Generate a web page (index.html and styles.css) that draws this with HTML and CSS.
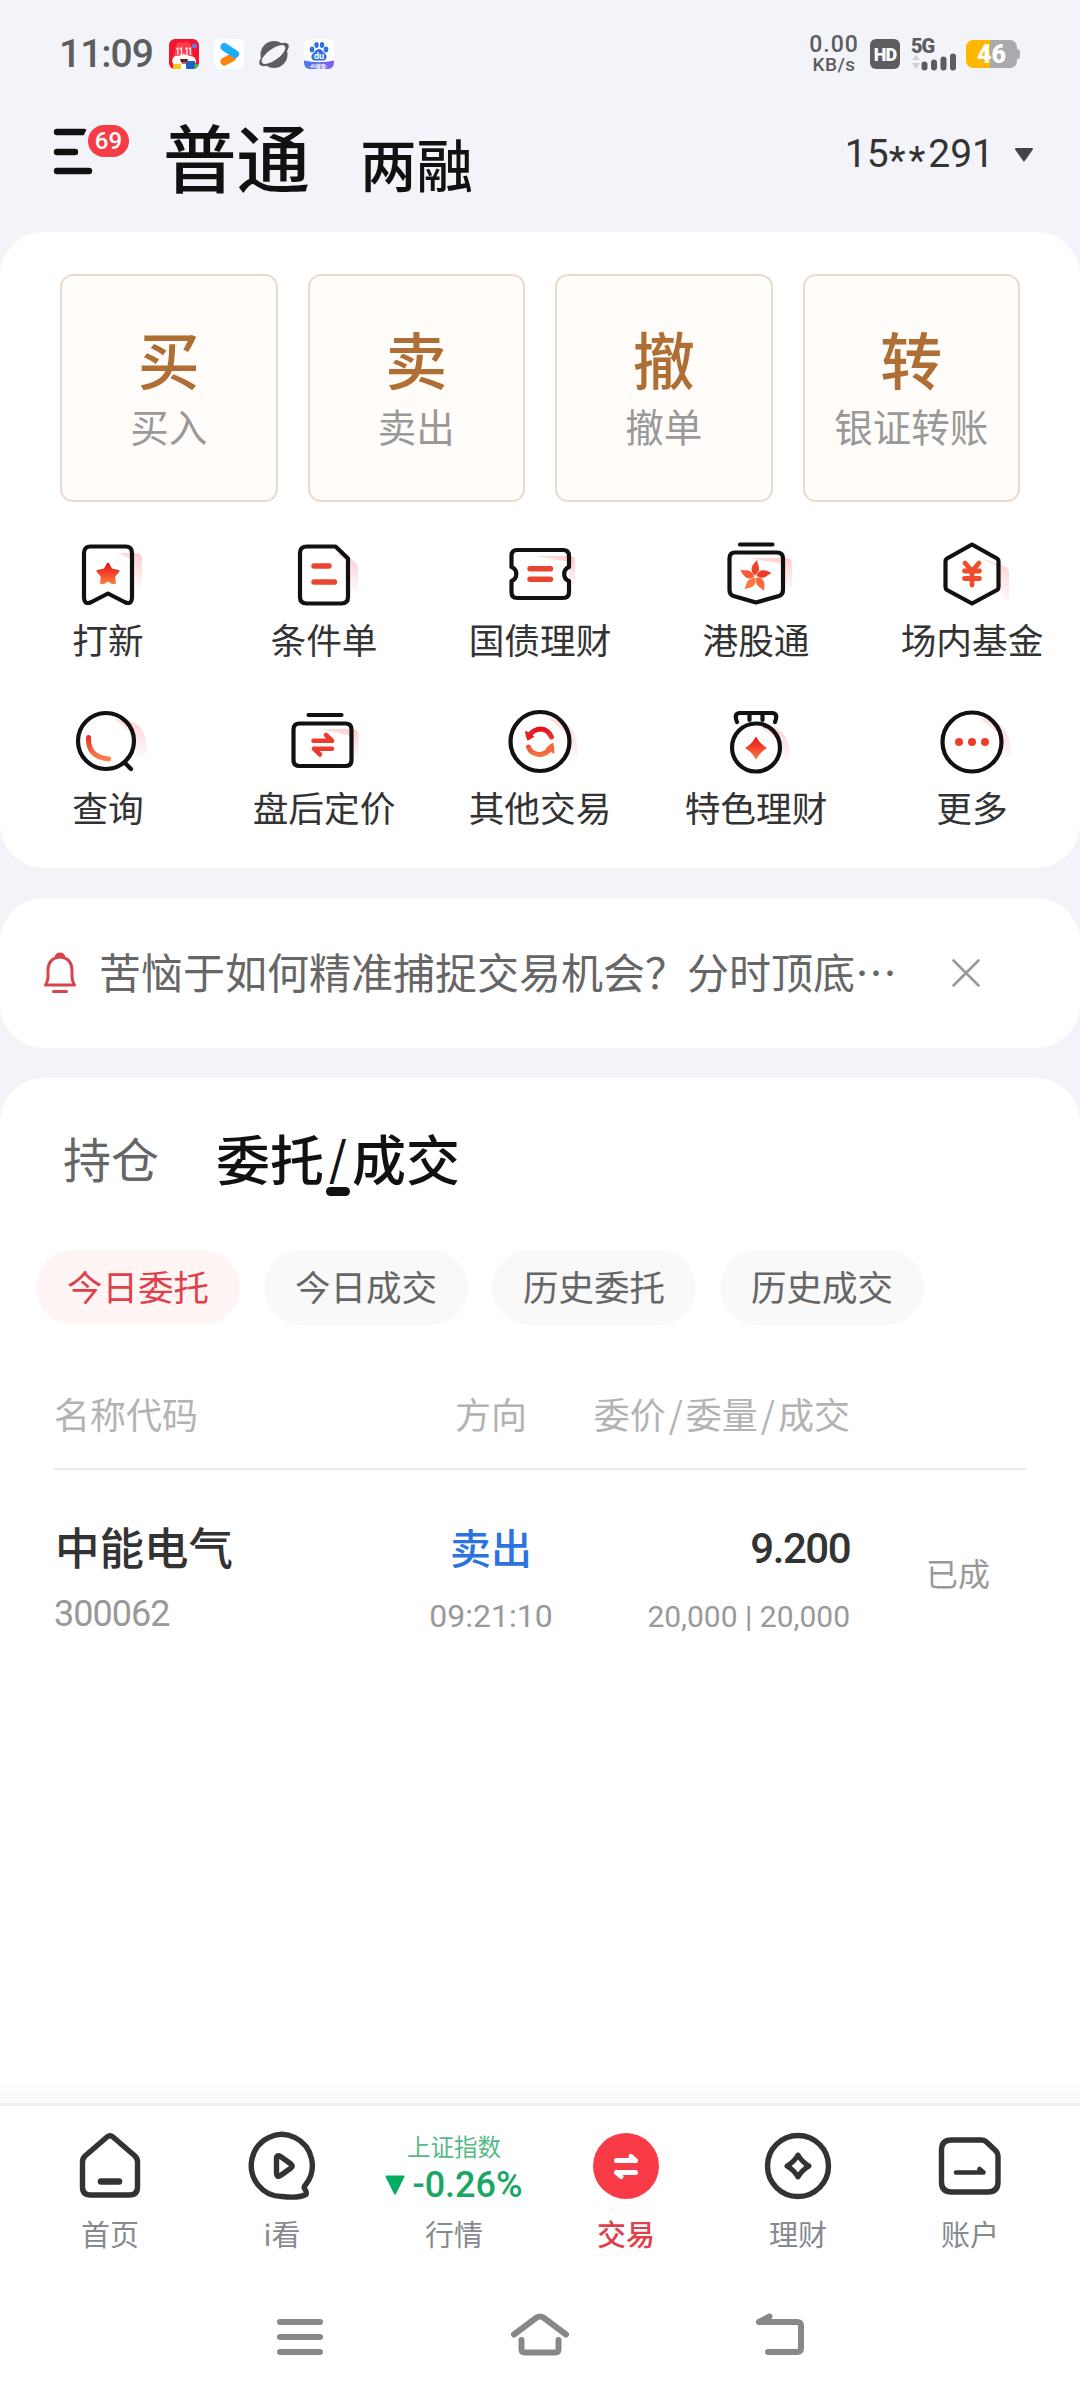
FILE: index.html
```html
<!DOCTYPE html>
<html lang="zh-CN">
<head>
<meta charset="utf-8">
<title>交易</title>
<link rel="stylesheet" href="styles.css">
</head>
<body>
<svg class="defs" width="0" height="0" aria-hidden="true">
  <defs>
    <linearGradient id="glow" x1="1" y1="0" x2="0.55" y2="1">
      <stop offset="0" stop-color="#f5323c" stop-opacity=".26"/>
      <stop offset=".45" stop-color="#f5323c" stop-opacity=".13"/>
      <stop offset="1" stop-color="#f5323c" stop-opacity="0"/>
    </linearGradient>
    <linearGradient id="hot" gradientUnits="userSpaceOnUse" x1="0" y1="20" x2="0" y2="53">
      <stop offset="0" stop-color="#e60f1e"/>
      <stop offset="1" stop-color="#fb8748"/>
    </linearGradient>
    <linearGradient id="star" x1="0" y1="0" x2="0" y2="1">
      <stop offset="0" stop-color="#e8101c"/>
      <stop offset="1" stop-color="#fd7a3c"/>
    </linearGradient>
    <linearGradient id="violet" x1="0" y1="0" x2="1" y2="0">
      <stop offset="0" stop-color="#4a77f0"/>
      <stop offset="1" stop-color="#8460ee"/>
    </linearGradient>
    <clipPath id="tile"><rect width="30" height="30" rx="6"/></clipPath>
  </defs>
</svg>

<div class="statusbar">
  <span class="clock">11:09</span>
  <div class="apps">
    <svg width="30" height="30" viewBox="0 0 30 30"><g clip-path="url(#tile)">
      <rect width="30" height="30" fill="#f3152c"/>
      <path d="M7 6Q9 1 14 4Q19 0 22 6L24 17H5Z" fill="#fb3c4a"/>
      <circle cx="25.500" cy="7" r="2.500" fill="#6c78e8"/>
      <path d="M3 22Q4 16 9 17Q15 14 21 17Q27 17 27 23L23 30H6Z" fill="#fff"/>
      <path d="M11 20H19Q18 25 15 25Q12 25 11 20Z" fill="#60232a"/>
      <path d="M13 23H18L17 25H14Z" fill="#f34a50"/>
      <rect x="4" y="25" width="8" height="5" fill="#ffc51e"/>
      <rect x="17" y="22" width="9" height="8" rx="1" fill="#1b60c8"/>
      <path d="M26 25H30V30H25Z" fill="#35ba55"/>
      <text x="7" y="15.500" class="tile-sale" textLength="16" lengthAdjust="spacingAndGlyphs">11.11</text>
    </g></svg>
    <svg width="30" height="30" viewBox="0 0 30 30"><rect width="30" height="30" rx="6" fill="#fff"/>
      <path d="M10.500 22.500L18 18.500" stroke="#ff860d" stroke-width="8" stroke-linecap="round"/>
      <path d="M10.500 8L21 15" stroke="#19aefa" stroke-width="8" stroke-linecap="round"/>
    </svg>
    <svg width="30" height="30" viewBox="0 0 30 30">
      <circle cx="15" cy="15.500" r="13.500" fill="#5c5d5f"/>
      <ellipse cx="15" cy="15.500" rx="17.500" ry="7" transform="rotate(-36 15 15.500)" fill="#5c5d5f"/>
      <ellipse cx="14.500" cy="15.500" rx="14" ry="5.600" transform="rotate(-36 14.500 15.500)" fill="#f3f4f9"/>
    </svg>
    <svg width="30" height="30" viewBox="0 0 30 30"><g clip-path="url(#tile)">
      <rect width="30" height="30" fill="#fff"/>
      <g fill="#2f6fe4"><ellipse cx="8" cy="10.500" rx="2.300" ry="3"/><ellipse cx="12.500" cy="6" rx="2.200" ry="3"/><ellipse cx="18" cy="6" rx="2.200" ry="3"/><ellipse cx="22" cy="10.500" rx="2.300" ry="3"/>
      <path d="M15 10C18 10 19 13 21 14.500C24 17 22.500 21.500 19 21.500H11C7.500 21.500 6 17 9 14.500C11 13 12 10 15 10Z"/></g>
      <path d="M0 21.500Q15 25 30 21.500V30H0Z" fill="url(#violet)"/>
      <text x="10" y="20" class="tile-du">du</text>
      <text x="5" y="28.800" class="tile-ai">-AI搜索-</text>
    </g></svg>
  </div>
  <div class="signals">
    <div class="speed"><span class="rate">0.00</span><span class="unit">KB/s</span></div>
    <span class="hd">HD</span>
    <div class="cell">
      <span class="gen">5G</span>
      <svg width="46" height="18" viewBox="0 0 46 18">
        <path d="M1 6L5 1L9 6ZM1 9H9L5 15Z" fill="#cfd0d4"/>
        <path d="M13.500 10.500V13.500M23 8.500V13.500M32.500 5.500V13.500M42 2.500V13.500" stroke="#5c5d5f" stroke-width="6" stroke-linecap="round"/>
      </svg>
    </div>
    <div class="battery"><span>46</span></div>
  </div>
</div>

<header class="header">
  <div class="menu">
    <svg width="46" height="46" viewBox="0 0 46 46">
      <path d="M3 3H30M3 23H21M3 42H35" stroke="#111" stroke-width="6.400" stroke-linecap="round"/>
      <path d="M34 -3L29 8H46V-3Z" fill="#f3f4f9"/>
    </svg>
    <span class="badge">69</span>
  </div>
  <div class="modes"><h1>普通</h1><h2>两融</h2></div>
  <div class="account">
    <span>15<i>**</i>291</span>
    <svg width="20" height="14" viewBox="0 0 20 14"><path d="M2 1H18L10 12.500Z" fill="#444" stroke="#444" stroke-width="2" stroke-linejoin="round"/></svg>
  </div>
</header>

<section class="panel trade">
  <div class="actions">
    <div class="action"><b>买</b><span>买入</span></div>
    <div class="action"><b>卖</b><span>卖出</span></div>
    <div class="action"><b>撤</b><span>撤单</span></div>
    <div class="action"><b>转</b><span>银证转账</span></div>
  </div>
  <div class="tools">
    <div class="tool">
      <svg class="ico" viewBox="0 0 88 70">
        <path d="M54 13H72Q78 13 78 19V48H69V20Z" fill="url(#glow)"/>
        <path class="ln" d="M26.500 6.500H61.500Q68 6.500 68 13V57Q68 65.500 60.500 62L44 53.500L27.500 62Q20 65.500 20 57V13Q20 6.500 26.500 6.500Z"/>
        <path d="M44 23.500L47.400 29.500L54.500 31L50 36.500L51 43H37L38 36.500L33.500 31L40.600 29.500Z" fill="url(#star)" stroke="url(#star)" stroke-width="2" stroke-linejoin="round"/>
        <path d="M38 45.500L44 41.500L50 45.500Z" fill="#fff"/>
      </svg><span>打新</span>
    </div>
    <div class="tool">
      <svg class="ico" viewBox="0 0 88 70">
        <path d="M56 14H66L76 23Q78 25 78 28V52H68V22Z" fill="url(#glow)"/>
        <path class="ln" d="M27 6.500H55.500L68 18.500V57Q68 63.500 61.500 63.500H26.500Q20 63.500 20 57V13Q20 6.500 27 6.500Z"/>
        <path class="rd" d="M34 26H49M34 42H54.500"/>
      </svg><span>条件单</span>
    </div>
    <div class="tool">
      <svg class="ico" viewBox="0 0 88 70">
        <path d="M40 16H74Q79 16 79 21V46H73V22Z" fill="url(#glow)"/>
        <path class="ln" d="M21 10H67Q73 10 73 16V27A7.500 7.500 0 0 0 73 41V52Q73 58 67 58H21Q15.500 58 15.500 52V41A7.500 7.500 0 0 0 15.500 27V16Q15.500 10 21 10Z"/>
        <path class="rd" d="M34 28.700H54.500M34 39.300H54.500"/>
      </svg><span>国债理财</span>
    </div>
    <div class="tool">
      <svg class="ico" viewBox="0 0 88 70">
        <path d="M36 18H74Q80 18 80 24V48H71V24Z" fill="url(#glow)"/>
        <path class="ln" d="M28 4.500H60.500M23 12.500H65Q71 12.500 71 18.500V50Q71 54.500 67 56L44 62.500L21.500 56Q17.500 54.500 17.500 50V18.500Q17.500 12.500 23 12.500Z"/>
        <g transform="translate(43.500 36.500)">
          <path d="M-.300-1C-6-5-5-11 2-16.500C1.500-13 4-11 3.500-7C3-4 1-3-.300-1Z" fill="#f4432d"/>
          <path d="M-.300-1C-6-5-5-11 2-16.500C1.500-13 4-11 3.500-7C3-4 1-3-.300-1Z" fill="#f23a2b" transform="rotate(72)"/>
          <path d="M-.300-1C-6-5-5-11 2-16.500C1.500-13 4-11 3.500-7C3-4 1-3-.300-1Z" fill="#fa6a38" transform="rotate(144)"/>
          <path d="M-.300-1C-6-5-5-11 2-16.500C1.500-13 4-11 3.500-7C3-4 1-3-.300-1Z" fill="#fb7a3f" transform="rotate(216)"/>
          <path d="M-.300-1C-6-5-5-11 2-16.500C1.500-13 4-11 3.500-7C3-4 1-3-.300-1Z" fill="#f65b35" transform="rotate(288)"/>
        </g>
      </svg><span>港股通</span>
    </div>
    <div class="tool">
      <svg class="ico" viewBox="0 0 88 70">
        <path d="M50 17L76 26Q81 28 81 33V62L71 50V27Z" fill="url(#glow)"/>
        <path class="ln" d="M44 4.500L69 18.500Q70.500 19.500 70.500 21.500V47Q70.500 49 69 50L44 63.500L19 50Q17.500 49 17.500 47V21.500Q17.500 19.500 19 18.500Z"/>
        <path d="M37 23L44 31L51 23M44 31V45M36.500 31H51.500M36.500 38.500H51.500" fill="none" stroke="#f24a2d" stroke-width="4.800" stroke-linecap="round"/>
      </svg><span>场内基金</span>
    </div>
    <div class="tool">
      <svg class="ico" viewBox="0 0 88 70">
        <path d="M50 11Q66 9 76 19Q83 28 83 45L72 50V28Z" fill="url(#glow)"/>
        <circle class="ln" cx="42" cy="33" r="28"/><path class="ln" d="M61 55L67 61"/>
        <path d="M24.500 29.500Q23.500 49 44.500 51" fill="none" stroke="url(#hot)" stroke-width="5" stroke-linecap="round"/>
      </svg><span>查询</span>
    </div>
    <div class="tool">
      <svg class="ico" viewBox="0 0 88 70">
        <path d="M40 21H73Q78.500 21 78.500 27V50H71V28Z" fill="url(#glow)"/>
        <path class="ln" d="M28.500 7H61.500M19.500 15.500H65.500Q71.500 15.500 71.500 21.500V52Q71.500 58 65.500 58H19.500Q13.500 58 13.500 52V21.500Q13.500 15.500 19.500 15.500Z"/>
        <path d="M33.500 32.700H52M46 27L52 32.700M34 40.700H52M34 40.700L40 46.500" fill="none" stroke="#ef3b2b" stroke-width="4.600" stroke-linecap="round" stroke-linejoin="round"/>
      </svg><span>盘后定价</span>
    </div>
    <div class="tool">
      <svg class="ico" viewBox="0 0 88 70">
        <path d="M52 10Q66 10 74 19Q82 28 82 48L73 50V28Z" fill="url(#glow)"/>
        <circle class="ln" cx="44" cy="33.500" r="29.500"/>
        <path d="M32.500 28Q38 21 45 21Q52 21.500 55.500 29M55.500 39Q50 47 43 46.500Q35 46 32.500 39" fill="none" stroke="url(#hot)" stroke-width="5" stroke-linecap="round"/>
        <path d="M30 24L32 31.500L37 28.500Z" fill="#ea1f22" stroke="#ea1f22" stroke-width="2" stroke-linejoin="round"/><path d="M51 40.500L56.500 36L57.500 44.500Z" fill="#f96b3b" stroke="#f96b3b" stroke-width="2" stroke-linejoin="round"/>
      </svg><span>其他交易</span>
    </div>
    <div class="tool">
      <svg class="ico" viewBox="0 0 88 70">
        <path d="M48 19Q62 16 70 24Q78 33 78 50L68 54V34Z" fill="url(#glow)"/>
        <circle class="ln" cx="44" cy="39.500" r="24"/>
        <path class="ln" d="M25 14Q21.500 5 28 5H60Q66.500 5 63 14M37.500 5V12M50.500 5V12"/>
        <path d="M44 28.500Q48 36 55 40Q48 44 44 51.500Q40 44 33 40Q40 36 44 28.500Z" fill="url(#star)"/>
      </svg><span>特色理财</span>
    </div>
    <div class="tool">
      <svg class="ico" viewBox="0 0 88 70">
        <path d="M52 10Q66 10 74 19Q83 28 83 48L73 50V28Z" fill="url(#glow)"/>
        <circle class="ln" cx="44" cy="34" r="29.500"/>
        <g fill="#ea3f2c"><circle cx="31" cy="34" r="4"/><circle cx="44" cy="34" r="4"/><circle cx="57" cy="34" r="4"/></g>
      </svg><span>更多</span>
    </div>
  </div>
</section>

<section class="panel notice">
  <svg width="34" height="42" viewBox="0 0 34 42" fill="none" stroke="#d8444c" stroke-width="3" stroke-linecap="round" stroke-linejoin="round">
    <path d="M5 19Q5 6 17 5Q29 6 29 19V25Q29 29 31.500 33H2.500Q5 29 5 25ZM13 5Q14 2 17 2Q20 2 21 5M10.500 39.500H23.500"/>
  </svg>
  <p>苦恼于如何精准捕捉交易机会？分时顶底…</p>
  <svg class="close" width="28" height="28" viewBox="0 0 28 28"><path d="M1.500 1.500L26.500 26.500M26.500 1.500L1.500 26.500" stroke="#999" stroke-width="2.600" stroke-linecap="round"/></svg>
</section>

<section class="panel orders">
  <div class="tabs"><span class="tab">持仓</span><span class="tab on">委托<i>/</i>成交</span></div>
  <div class="chips">
    <span class="chip on">今日委托</span><span class="chip">今日成交</span><span class="chip">历史委托</span><span class="chip">历史成交</span>
  </div>
  <div class="row head">
    <span>名称代码</span><span class="mid">方向</span><span class="end">委价<i>/</i>委量<i>/</i>成交</span>
  </div>
  <div class="row item">
    <div class="col"><b class="name">中能电气</b><span class="code">300062</span></div>
    <div class="col mid"><b class="side">卖出</b><span class="time">09:21:10</span></div>
    <div class="col end"><b class="price">9.200</b><span class="qty">20,000 | 20,000</span></div>
    <div class="state">已成</div>
  </div>
</section>

<nav class="tabbar">
  <div class="nav">
    <svg class="nico" viewBox="0 0 68 68"><path d="M31 5Q34 2.500 37 5L59 24Q61.500 26.500 61.500 30V55Q61.500 63 53.500 63H14.500Q6.500 63 6.500 55V30Q6.500 26.500 9 24Z"/><path d="M25 49.500H43" stroke-width="6.500"/></svg>
    <span>首页</span>
  </div>
  <div class="nav">
    <svg class="nico" viewBox="0 0 68 68"><path d="M56.500 56.500Q55.500 55 57.500 53A30.500 31 0 1 0 34 64.500Q50 66.500 58 62.500Q59 60 56.500 56.500Z"/><path d="M28.500 27Q28.500 22 32.500 24.500L43 32Q45.500 34 43 36L32.500 43.500Q28.500 46 28.500 41Z"/></svg>
    <span>i看</span>
  </div>
  <div class="nav">
    <div class="index"><small>上证指数</small><div class="pct"><svg width="20" height="20" viewBox="0 0 20 20"><path d="M1.500 1.500H18.500L10 18.500Z" fill="#04ad60" stroke="#04ad60" stroke-width="2" stroke-linejoin="round"/></svg><span>-0.26%</span></div></div>
    <span>行情</span>
  </div>
  <div class="nav on">
    <svg class="nico" viewBox="0 0 68 68"><circle cx="34" cy="34" r="33" fill="#f93b47" stroke="none"/><path d="M24.500 28.500H43.500M39 24.500L43.500 28.500M43.500 40.500H24.500M24.500 40.500L29 44.500" stroke="#fff" stroke-width="5"/></svg>
    <span>交易</span>
  </div>
  <div class="nav">
    <svg class="nico" viewBox="0 0 68 68"><circle cx="34" cy="34" r="30.500"/><path d="M34 23Q38 30 45 34Q38 38 34 45Q30 38 23 34Q30 30 34 23Z" stroke-width="5"/></svg>
    <span>理财</span>
  </div>
  <div class="nav">
    <svg class="nico" viewBox="0 0 68 68"><path d="M15.500 8H45.500Q48.500 8 50.500 10L59.500 18.500Q62 21 62 24V50Q62 60 52 60H15.500Q5.500 60 5.500 50V18Q5.500 8 15.500 8Z"/><path d="M20 40.500H47.500L43.500 37V40" stroke-width="4.600"/></svg>
    <span>账户</span>
  </div>
</nav>

<div class="sysnav">
  <svg width="60" height="48" viewBox="0 0 60 48"><path d="M10 9H50M10 24H50M10 39H50"/></svg>
  <svg width="60" height="48" viewBox="0 0 60 48"><path d="M4 21.500L26 5Q30 2 34 5L56 21.500M11.500 27V36Q11.500 39.500 15 39.500H45Q48.500 39.500 48.500 36V27"/></svg>
  <svg width="60" height="48" viewBox="0 0 60 48"><path d="M19.500 3.500L9 9H47Q51 9 51 13V35Q51 39 47 39H18"/></svg>
</div>
</body>
</html>
```
FILE: styles.css
```css
* { box-sizing: border-box; margin: 0; padding: 0; }

body {
  width: 1080px;
  height: 2400px;
  display: flex;
  flex-direction: column;
  background: #f3f4f9;
  color: #333;
  font-family: "Noto Sans CJK SC", sans-serif;
  overflow: hidden;
}

svg { display: block; flex: none; overflow: visible; }
i { font-style: normal; }
.defs { position: absolute; }

/* status bar */
.statusbar {
  height: 108px;
  padding: 0 60px 0 59px;
  display: flex;
  align-items: center;
  color: #5c5d5f;
  font-family: Roboto, sans-serif;
}
.clock { width: 110px; font-size: 39px; font-weight: 500; letter-spacing: -1px; }
.apps { display: flex; gap: 15px; }
.tile-sale { font: 900 10px Roboto, sans-serif; fill: #fff; }
.tile-du { font: 700 9px Roboto, sans-serif; fill: #fff; }
.tile-ai { font: 700 5px "Noto Sans CJK SC", sans-serif; fill: #fff; }
.signals { margin-left: auto; height: 38px; display: flex; align-items: center; }
.speed { width: 50px; margin-right: 11px; display: flex; flex-direction: column; align-items: center; font-weight: 500; }
.rate { font-size: 23px; line-height: 21px; letter-spacing: 1px; }
.unit { font-size: 19px; line-height: 20px; letter-spacing: .500px; }
.hd {
  width: 30px; height: 30px; margin-right: 11px;
  border-radius: 6px; background: #5c5d5f; color: #fff;
  font-size: 18px; font-weight: 900; line-height: 31px; text-align: center; letter-spacing: -1px;
}
.cell { width: 46px; height: 31px; margin-right: 9px; }
.gen { display: block; height: 15px; font-size: 20px; font-weight: 900; line-height: 15px; letter-spacing: -1px; }
.battery {
  position: relative;
  width: 51px; height: 28px; margin-right: 3px; border-radius: 7px;
  background: linear-gradient(90deg, #ffb800 24px, #a9aaae 24px);
  color: #fff; font-size: 25px; font-weight: 900; line-height: 29px; text-align: center;
}
.battery::after {
  content: ""; position: absolute; right: -3px; top: 9px;
  width: 4px; height: 10px; border-radius: 0 3px 3px 0; background: #a9aaae;
}

/* header */
.header { height: 124px; padding: 0 46px 24px 54px; display: flex; align-items: center; }
.menu { position: relative; width: 109px; height: 60px; padding-top: 1px; }
.badge {
  position: absolute; left: 34px; top: -3px;
  width: 41px; height: 32px; border-radius: 16px;
  background: #f63c46; color: #fff;
  font: 500 24px/32px Roboto, sans-serif; text-align: center;
}
.modes { display: flex; align-items: baseline; gap: 50px; color: #111; }
.modes h1 { font-size: 73.500px; font-weight: 500; line-height: 92px; }
.modes h2 { font-size: 56.500px; font-weight: 500; line-height: 92px; }
.account { margin-left: auto; padding-bottom: 6px; display: flex; align-items: center; gap: 20px; font: 400 39px/40px Roboto, sans-serif; }
.account i { display: inline-block; line-height: 30px; vertical-align: -7px; letter-spacing: 3px; }

/* panels */
.panel { background: #fff; border-radius: 44px; flex: none; }
.trade { height: 636px; padding-top: 42px; }
.actions { padding: 0 60px; display: grid; grid-template-columns: repeat(4, 1fr); gap: 30px; }
.action {
  height: 228px; padding-top: 43px; border: 2px solid #e8dacd; border-radius: 13px;
  background: #fffcf9; display: flex; flex-direction: column; align-items: center;
}
.action b { height: 77px; font-size: 62px; font-weight: 500; line-height: 78px; color: #af6e33; }
.action span { font-size: 38.500px; line-height: 58px; color: #999; }
.tools { padding-top: 38px; display: grid; grid-template-columns: repeat(5, 216px); grid-auto-rows: 168px; }
.tool { display: flex; flex-direction: column; align-items: center; font-size: 35.700px; line-height: 57px; }
.ico { width: 88px; height: 70px; fill: none; }
.ln { fill: none; stroke: #111; stroke-width: 4.200; stroke-linecap: round; stroke-linejoin: round; }
.rd { fill: none; stroke: #ea4530; stroke-width: 5.400; stroke-linecap: round; }

.notice { height: 150px; margin: 30px 0; padding: 0 100px 0 43px; display: flex; align-items: center; }
.notice p { margin-left: 22px; font-size: 42px; line-height: 60px; padding-bottom: 4px; color: #666; white-space: nowrap; }
.close { margin-left: auto; }

/* orders */
.orders { height: 1025px; border-radius: 44px 44px 0 0; }
.tabs { height: 172px; padding: 46px 0 0 63px; display: flex; gap: 57px; }
.tab { font-size: 48px; line-height: 66px; color: #666; }
.tab.on { position: relative; font-size: 54px; line-height: 68px; font-weight: 500; color: #111; }
.tab i { padding: 0 5px; font-size: 46px; vertical-align: 5px; line-height: 40px; }
.tab.on::after {
  content: ""; position: absolute; left: 50%; top: 63px; margin-left: -12px;
  width: 24px; height: 9px; border-radius: 5px; background: #111;
}
.chips { padding-left: 36px; display: flex; gap: 24px; }
.chip { width: 204px; height: 75px; border-radius: 38px; background: #f9f9f9; color: #666; font-size: 35.500px; line-height: 72px; text-align: center; }
.chip.on { background: #fff5f4; color: #e0404b; }
.row { margin: 0 54px; display: grid; grid-template-columns: 335px 204px 257px 1fr; }
.head { height: 145px; padding-top: 57px; border-bottom: 2px solid #ebebeb; font-size: 36px; line-height: 62px; color: #b3b3b3; }
.head i { padding: 0 3px; }
.mid { text-align: center; }
.end { text-align: right; }
.item { padding-top: 42px; }
.col { display: flex; flex-direction: column; }
.col b { height: 68px; line-height: 68px; font-weight: 500; }
.col span { line-height: 48px; padding-top: 10px; color: #999; font-family: Roboto, sans-serif; }
.col .name { padding-left: 1px; font-size: 44.500px; }
.col .side { font-size: 41px; color: #2b73e0; }
.col .price { font: 500 42px/73px Roboto, sans-serif; letter-spacing: -1.500px; height: 68px; }
.col .code { font-size: 36px; letter-spacing: -1px; }
.col .time { font-size: 32px; line-height: 52px; }
.col .qty { font-size: 30px; line-height: 53px; }
.state { padding: 30px 0 0 76px; font-size: 32px; line-height: 60px; color: #999; }

/* bottom navigation */
.tabbar {
  position: relative; flex: none;
  height: 159px; padding: 26px 24px 0; border-top: 3px solid #efefef;
  background: #fff; display: grid; grid-template-columns: repeat(6, 172px);
}
.tabbar::before {
  content: ""; position: absolute; left: 0; right: 0; top: -27px; height: 24px;
  background: linear-gradient(#fff, #f9f9f9);
}
.nav { display: flex; flex-direction: column; align-items: center; font-size: 29px; color: #868a90; }
.nav > span { height: 60px; line-height: 64px; }
.nav.on { color: #e0404b; }
.nav.on > span { font-weight: 500; }
.nico { width: 68px; height: 68px; margin-bottom: 1px; fill: none; stroke: #333; stroke-width: 5.400; stroke-linecap: round; stroke-linejoin: round; }
.index { height: 69px; color: #1aa665; }
.index small { display: block; height: 32px; font-size: 23.500px; line-height: 28px; text-align: center; color: #54b987; }
.pct { display: flex; align-items: center; gap: 7px; font: 500 36px/42px Roboto, sans-serif; height: 42px; }

.sysnav { flex: none; height: 138px; padding: 51px 0 0 270px; background: #fff; display: flex; gap: 180px; }
.sysnav svg { fill: none; stroke: #888; stroke-width: 6; stroke-linecap: round; stroke-linejoin: round; }
```
